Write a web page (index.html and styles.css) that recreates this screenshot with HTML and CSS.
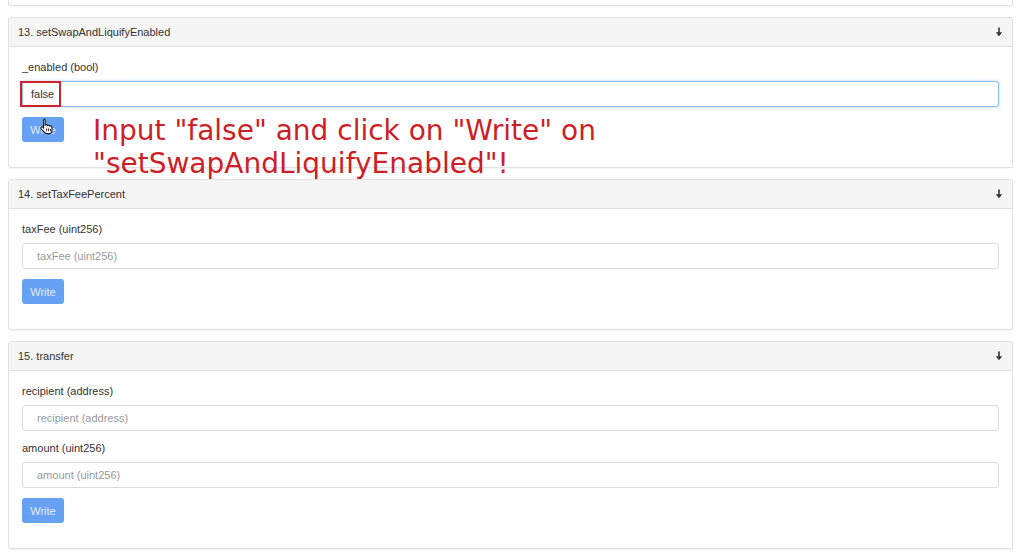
FILE: index.html
```html
<!DOCTYPE html>
<html>
<head>
<meta charset="utf-8">
<link rel="stylesheet" href="styles.css">
</head>
<body>
<div class="page">
  <div class="card stub"></div>

  <div class="card">
    <div class="card-head">
      <span>13. setSwapAndLiquifyEnabled</span>
      <svg class="arrow" viewBox="0 0 8 10" width="8" height="10"><path d="M4 0.5 V7" stroke="#333" stroke-width="1.6"/><path d="M0.8 5.2 L4 9.3 L7.2 5.2 Z" fill="#333"/></svg>
    </div>
    <div class="card-body">
      <div class="field">
        <label class="label">_enabled (bool)</label>
        <div class="input-wrap">
          <input class="input focused" value="false">
          <div class="highlight"></div>
        </div>
      </div>
      <div class="btn-wrap">
        <button class="btn">Write</button>
        <svg class="cursor" viewBox="0 0 16 18" width="15" height="17">
          <path d="M5.2 1.2c.9 0 1.4.6 1.4 1.4v5.2c.2-.6.8-.9 1.4-.8.7.1 1.1.6 1.1 1.2.3-.5.8-.7 1.4-.6.6.1 1 .6 1 1.2.3-.4.8-.6 1.3-.5.6.1 1 .6 1 1.3v3.3c0 2-1.4 3.7-3.4 3.7H8.6c-1.3 0-2.3-.6-3-1.6L2.2 11.4c-.4-.6-.3-1.4.3-1.8.6-.4 1.3-.2 1.7.3l.7 1V2.6c0-.8.5-1.4 1.3-1.4z" fill="#fff" stroke="#111" stroke-width="1.1" stroke-linejoin="round"/>
          <path d="M8.1 11v3M10.2 11v3M12.2 11.5v2.5" stroke="#111" stroke-width="0.9"/>
        </svg>
      </div>
      <div class="note">Input "false" and click on "Write" on<br>"setSwapAndLiquifyEnabled"!</div>
    </div>
  </div>

  <div class="card">
    <div class="card-head">
      <span>14. setTaxFeePercent</span>
      <svg class="arrow" viewBox="0 0 8 10" width="8" height="10"><path d="M4 0.5 V7" stroke="#333" stroke-width="1.6"/><path d="M0.8 5.2 L4 9.3 L7.2 5.2 Z" fill="#333"/></svg>
    </div>
    <div class="card-body">
      <div class="field">
        <label class="label">taxFee (uint256)</label>
        <input class="input" placeholder="taxFee (uint256)">
      </div>
      <button class="btn">Write</button>
    </div>
  </div>

  <div class="card">
    <div class="card-head">
      <span>15. transfer</span>
      <svg class="arrow" viewBox="0 0 8 10" width="8" height="10"><path d="M4 0.5 V7" stroke="#333" stroke-width="1.6"/><path d="M0.8 5.2 L4 9.3 L7.2 5.2 Z" fill="#333"/></svg>
    </div>
    <div class="card-body">
      <div class="field">
        <label class="label">recipient (address)</label>
        <input class="input" placeholder="recipient (address)">
      </div>
      <div class="field">
        <label class="label">amount (uint256)</label>
        <input class="input" placeholder="amount (uint256)">
      </div>
      <button class="btn">Write</button>
    </div>
  </div>
</div>
</body>
</html>
```

FILE: styles.css
```css
* { box-sizing: border-box; }
html, body { margin: 0; padding: 0; background: #fff; }
body {
  font-family: "Liberation Sans", Arial, sans-serif;
  font-size: 11px;
  color: #333;
  overflow: hidden;
}
.page {
  padding: 0 9px 0 8px;
}
.card {
  border: 1px solid #e1e1e1;
  border-radius: 3px;
  background: #fff;
  box-shadow: 0 1px 1px rgba(0,0,0,0.04);
  margin-bottom: 11px;
}
.card.stub {
  height: 6px;
  border-top: none;
  border-radius: 0 0 3px 3px;
}
.card-head {
  height: 29px;
  background: #f5f5f5;
  border-bottom: 1px solid #dedede;
  border-radius: 3px 3px 0 0;
  padding: 0 9px 0 9px;
  display: flex;
  align-items: center;
  justify-content: space-between;
  line-height: 14px;
}
.arrow { display: block; }
.card-body {
  position: relative;
  padding: 13px 13px 25px 13px;
}
.field {
  display: flex;
  flex-direction: column;
  margin-bottom: 10px;
}
.label {
  display: block;
  line-height: 14px;
  margin-bottom: 7px;
  color: #333;
}
.input-wrap { position: relative; }
.input {
  display: block;
  width: 100%;
  height: 26px;
  border: 1px solid #dcdcdc;
  border-radius: 3px;
  padding: 0 14px;
  font-family: "Liberation Sans", Arial, sans-serif;
  font-size: 11px;
  color: #333;
  background: #fff;
  outline: none;
}
.input::placeholder { color: #9a9a9a; }
.input.focused {
  border-color: #8fbce8;
  box-shadow: 0 0 3px rgba(102,160,225,0.55);
  padding-left: 8px;
}
.highlight {
  position: absolute;
  left: -2px;
  top: 0;
  width: 41px;
  height: 26px;
  border: 2px solid #d0222a;
}
.btn-wrap { position: relative; width: 42px; margin-top: 1px; }
.btn {
  display: block;
  height: 25px;
  width: 42px;
  padding: 0;
  margin-top: 1px;
  border: none;
  border-radius: 3px;
  background: #66a1f4;
  color: rgba(255,255,255,0.85);
  font-family: "Liberation Sans", Arial, sans-serif;
  font-size: 11px;
  text-align: center;
}
.btn-wrap .btn { margin-top: 0; }
.cursor {
  position: absolute;
  left: 17px;
  top: 1px;
}
.note {
  position: absolute;
  left: 84px;
  top: 67px;
  font-family: "DejaVu Sans", Verdana, sans-serif;
  font-size: 28px;
  line-height: 33px;
  color: #cc1f27;
  white-space: nowrap;
}
```
